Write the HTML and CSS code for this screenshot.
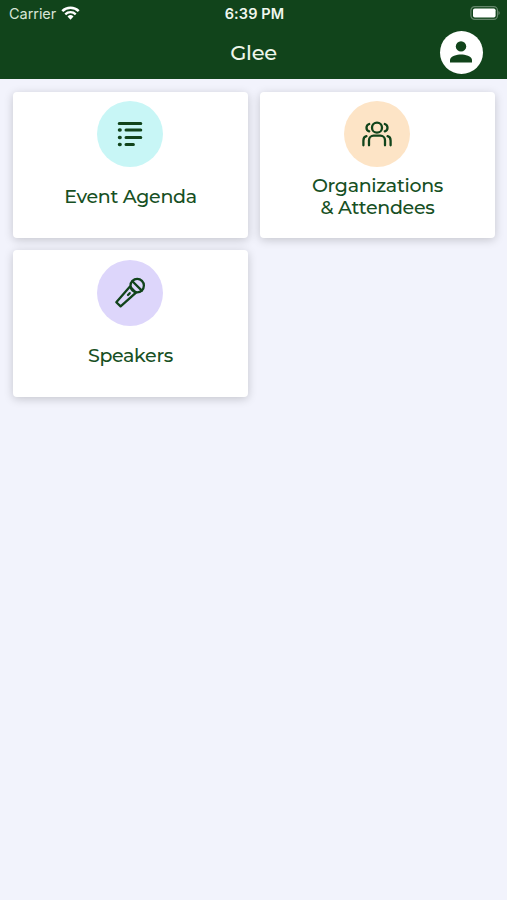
FILE: index.html
```html
<!DOCTYPE html>
<html lang="en">
<head>
    <meta charset="utf-8"/>
    <title>Glee</title>
    <meta name="viewport" content="width=device-width, initial-scale=1.0"/>
    <link rel="stylesheet" href="styles.css">
</head>
<body>
<header class="header">
    <div class="status_bar">
        <div class="status_left">
            <span class="carrier">Carrier</span>
            <svg class="wifi" viewBox="0 0 20 15">
                <path d="M1.2 5.6a12.5 12.5 0 0 1 17.6 0" fill="none" stroke="#fff" stroke-width="2.7"/>
                <path d="M4.4 8.9a8 8 0 0 1 11.2 0" fill="none" stroke="#fff" stroke-width="2.5"/>
                <path d="M10 14.6l-3.2-3.3a4.6 4.6 0 0 1 6.4 0z" fill="#fff"/>
            </svg>
        </div>
        <span class="time">6:39 PM</span>
        <div class="status_right">
            <svg class="battery" viewBox="0 0 30 14">
                <rect x=".9" y=".6" width="26.6" height="12.8" rx="3.8" fill="none" stroke="#fff" stroke-opacity=".35" stroke-width="1.2"/>
                <rect x="3" y="2.4" width="22.6" height="9.2" rx="1.8" fill="#fff"/>
                <path d="M28.6 5v4c1.3-.6 1.3-3.4 0-4z" fill="#fff" fill-opacity=".45"/>
            </svg>
        </div>
    </div>
    <div class="nav_bar">
        <h1 class="title">Glee</h1>
        <button class="profile" aria-label="Profile">
            <svg viewBox="0 0 22 22">
                <circle cx="11" cy="5.4" r="5.2"/>
                <path d="M0 21.4v-2.6c0-3.6 7.2-5.4 11-5.4s11 1.8 11 5.4v2.6z"/>
            </svg>
        </button>
    </div>
</header>
<main class="cards">
    <a class="card">
        <svg class="card_icon agenda" viewBox="0 0 66 66">
            <path d="M22.2 22.5h21.6M29 29.1h14.8M29 36.4h14.8M29 43.6h7.4"/>
            <path d="M22.5 29.1h.6M22.5 36.4h.6M22.5 43.6h.6" stroke-width="3.5"/>
        </svg>
        <span class="card_title">Event Agenda</span>
    </a>
    <a class="card">
        <svg class="card_icon people" viewBox="0 0 66 66">
            <circle cx="33" cy="26.7" r="5"/>
            <path d="M25 44.3v-5.1a4.6 4.6 0 0 1 4.6-4.6h6.8a4.6 4.6 0 0 1 4.6 4.6v5.1"/>
            <path d="M25.2 23c-3.6 1.2-3.6 6.2 0 7.4M40.8 23c3.6 1.2 3.6 6.2 0 7.4"/>
            <path d="M19.4 44.3v-4.5c0-2.6 1.2-4.2 3-4.6M46.6 44.3v-4.5c0-2.6-1.2-4.2-3-4.6"/>
        </svg>
        <span class="card_title">Organizations<br>&amp; Attendees</span>
    </a>
    <a class="card">
        <svg class="card_icon mic" viewBox="0 0 66 66">
            <circle cx="40.2" cy="25.6" r="6.7"/>
            <path d="M35.4 21.2l9.4 9.4"/>
            <path d="M33 26.6L19.3 42.2l4.3 4.2L39 32.7z"/>
            <path d="M31 35l1.7-1.8"/>
        </svg>
        <span class="card_title">Speakers</span>
    </a>
</main>
</body>
</html>
```
FILE: styles.css
```css
* {
    box-sizing: border-box;
}

body {
    margin: 0;
    min-height: 100vh;
    background: #f2f3fc;
    font-family: Montserrat, Inter, sans-serif;
}

.header {
    height: 79px;
    background: #11441b;
    color: #fff;
}

.status_bar {
    display: grid;
    grid-template-columns: 1fr auto 1fr;
    align-items: center;
    height: 27px;
    padding: 0 7px 0 9px;
    font-family: Inter, sans-serif;
}

.status_left {
    display: flex;
    align-items: center;
    gap: 5px;
}

.carrier {
    font-size: 14.5px;
    letter-spacing: -0.05px;
    color: #d8e5d6;
}

.wifi {
    width: 19px;
    height: 14px;
    margin-bottom: 1px;
}

.time {
    font-size: 14.5px;
    font-weight: 600;
    letter-spacing: 0.1px;
    color: #f0f7ee;
}

.status_right {
    display: flex;
    justify-content: flex-end;
}

.battery {
    width: 30px;
    height: 14px;
    margin-bottom: 1px;
}

.nav_bar {
    display: grid;
    grid-template-columns: 1fr auto 1fr;
    align-items: center;
    height: 51px;
    padding: 0 24px;
}

.title {
    grid-column: 2;
    margin: 0;
    font-size: 21px;
    font-weight: 500;
    letter-spacing: -0.3px;
    color: #eef6ea;
}

.profile {
    display: flex;
    align-items: center;
    justify-content: center;
    justify-self: end;
    width: 43px;
    height: 43px;
    padding: 0;
    border: none;
    border-radius: 50%;
    background: #fff;
}

.profile svg {
    width: 22px;
    height: 22px;
    margin: 0 1px 1px 0;
    fill: #11441b;
}

.cards {
    display: grid;
    grid-template-columns: 235px 235px;
    grid-auto-rows: 146.5px;
    gap: 12px;
    padding: 12.5px 12px 12px 13px;
}

.card {
    display: flex;
    flex-direction: column;
    align-items: center;
    padding-top: 9.5px;
    border-radius: 4px;
    background: #fff;
    box-shadow: 0 2px 10px rgba(0, 0, 0, 0.19);
}

.card_icon {
    flex: none;
    width: 66px;
    height: 66px;
    margin-right: 1px;
    border-radius: 50%;
    fill: none;
    stroke: #11441b;
    stroke-width: 2.3;
    stroke-linecap: round;
    stroke-linejoin: round;
}

.agenda {
    background: #c8f6f6;
    stroke-width: 3;
}

.people {
    background: #fde4c6;
}

.mic {
    background: #ddd6fb;
}

.card_title {
    display: flex;
    align-items: center;
    height: 60px;
    font-size: 19px;
    font-weight: 500;
    line-height: 22px;
    letter-spacing: -0.32px;
    text-align: center;
    white-space: nowrap;
    color: #175024;
}
```
